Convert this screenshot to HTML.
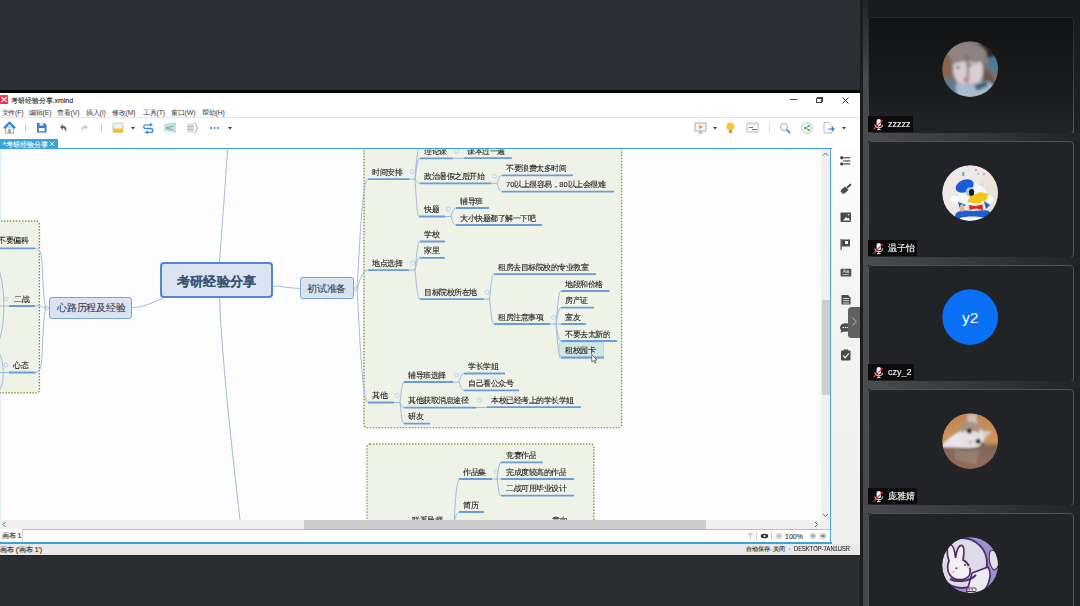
<!DOCTYPE html>
<html><head><meta charset="utf-8"><style>
html,body{margin:0;padding:0;width:1080px;height:606px;overflow:hidden;background:#2c2f33}
body{position:relative;font-family:'Liberation Sans',sans-serif;}
div{font-family:'Liberation Sans',sans-serif;}
</style></head><body>
<div style="position:absolute;left:0px;top:0px;width:862px;height:90px;background:#2c2f33"></div>
<div style="position:absolute;left:0px;top:90px;width:862px;height:3px;background:#050505"></div>
<div style="position:absolute;left:0px;top:555px;width:862px;height:51px;background:#2b2e31"></div>
<div style="position:absolute;left:0px;top:555px;width:862px;height:1px;background:#222427"></div>
<div style="position:absolute;left:0px;top:93px;width:860px;height:462px;background:#ffffff"></div>
<svg style="position:absolute;left:0;top:95px" width="9" height="10"><defs><linearGradient id="ti" x1="0" y1="1" x2="1" y2="0"><stop offset="0" stop-color="#e8235a"/><stop offset="1" stop-color="#f04a3a"/></linearGradient></defs><rect x="0" y="0" width="8.2" height="9" rx="1" fill="url(#ti)"/><path d="M1.2 2.3 C3 3.5 5 5.5 7 7 M1.2 7 C3 5.5 5 3.5 7 2.3" fill="none" stroke="#fff" stroke-width="1.1"/></svg>
<div style="position:absolute;left:10.5px;top:97.00px;font-size:7px;line-height:7px;color:#222;white-space:nowrap;letter-spacing:0px;-webkit-text-stroke:0.1px #222;">考研经验分享.xmind</div>
<div style="position:absolute;left:790px;top:99px;width:7px;height:1px;background:#444"></div>
<div style="position:absolute;left:816px;top:98px;width:6px;height:5px;border:1px solid #444;box-sizing:border-box"></div>
<div style="position:absolute;left:817px;top:97px;width:6px;height:1px;background:#444"></div>
<div style="position:absolute;left:822px;top:97px;width:1px;height:5px;background:#444"></div>
<svg style="position:absolute;left:841px;top:96px" width="9" height="9"><path d="M1.5 1.5 L7.5 7.5 M1.5 7.5 L7.5 1.5" stroke="#333" stroke-width="1"/></svg>
<div style="position:absolute;left:1.5px;top:108.50px;font-size:7px;line-height:7px;color:#3a3a3a;white-space:nowrap;letter-spacing:-0.2px;-webkit-text-stroke:0.1px #3a3a3a;-webkit-text-stroke:0">文件(F)</div>
<div style="position:absolute;left:29px;top:108.50px;font-size:7px;line-height:7px;color:#3a3a3a;white-space:nowrap;letter-spacing:-0.2px;-webkit-text-stroke:0.1px #3a3a3a;-webkit-text-stroke:0">编辑(E)</div>
<div style="position:absolute;left:57px;top:108.50px;font-size:7px;line-height:7px;color:#3a3a3a;white-space:nowrap;letter-spacing:-0.2px;-webkit-text-stroke:0.1px #3a3a3a;-webkit-text-stroke:0">查看(V)</div>
<div style="position:absolute;left:86px;top:108.50px;font-size:7px;line-height:7px;color:#3a3a3a;white-space:nowrap;letter-spacing:-0.2px;-webkit-text-stroke:0.1px #3a3a3a;-webkit-text-stroke:0">插入(I)</div>
<div style="position:absolute;left:112px;top:108.50px;font-size:7px;line-height:7px;color:#3a3a3a;white-space:nowrap;letter-spacing:-0.2px;-webkit-text-stroke:0.1px #3a3a3a;-webkit-text-stroke:0">修改(M)</div>
<div style="position:absolute;left:143px;top:108.50px;font-size:7px;line-height:7px;color:#3a3a3a;white-space:nowrap;letter-spacing:-0.2px;-webkit-text-stroke:0.1px #3a3a3a;-webkit-text-stroke:0">工具(T)</div>
<div style="position:absolute;left:171px;top:108.50px;font-size:7px;line-height:7px;color:#3a3a3a;white-space:nowrap;letter-spacing:-0.2px;-webkit-text-stroke:0.1px #3a3a3a;-webkit-text-stroke:0">窗口(W)</div>
<div style="position:absolute;left:202px;top:108.50px;font-size:7px;line-height:7px;color:#3a3a3a;white-space:nowrap;letter-spacing:-0.2px;-webkit-text-stroke:0.1px #3a3a3a;-webkit-text-stroke:0">帮助(H)</div>
<div style="position:absolute;left:0px;top:116.5px;width:860px;height:1.0px;background:#e6e6e6"></div>
<svg style="position:absolute;left:0;top:117px" width="240" height="21">
<rect x="5.5" y="10" width="8" height="6.3" fill="#eee" stroke="#aaa" stroke-width="0.9"/>
<rect x="8.3" y="12.2" width="2.4" height="4" fill="#999"/>
<path d="M4 11.3 L9.5 5.8 L15 11.3" fill="none" stroke="#2e7fd6" stroke-width="2.2"/>
<rect x="25" y="7" width="1" height="8" fill="#ccc"/>
<path d="M37 6 H44.5 L46.5 8 V15.5 H37 Z" fill="#2f7fd8"/>
<rect x="39.5" y="6.3" width="4" height="2.2" fill="#fff"/>
<rect x="38.8" y="11" width="5.8" height="3.2" fill="#fff"/>
<path d="M60 10 L63 7 L63 9 C66 9 67 11 66 15 C65 12 64 11 63 11 L63 13 Z" fill="#666"/>
<path d="M88 10 L85 7 L85 9 C82 9 81 11 82 15 C83 12 84 11 85 11 L85 13 Z" fill="#ccc"/>
<rect x="101" y="7" width="1" height="8" fill="#ccc"/>
<rect x="113" y="6" width="10" height="9.5" rx="1" fill="#f2f2f2" stroke="#bbb" stroke-width="0.8"/>
<rect x="113" y="11.5" width="10" height="4" fill="#f3c12b"/>
<path d="M131 10 L135 10 L133 12.5 Z" fill="#333"/>
<path d="M150.5 7.8 H145.6 A1.85 1.85 0 0 0 145.6 11.5 H151 A1.9 1.9 0 0 1 151 15.3 H147" fill="none" stroke="#3f8fe0" stroke-width="1.3"/><path d="M150 5.8 L153.2 7.8 L150 9.8Z M147.8 13.3 L144.5 15.3 L147.8 17.3Z" fill="#3f8fe0"/>
<path d="M164 7 L176 5 L176 16 L164 14 Z" fill="#bfe0f0"/>
<path d="M166 11 L173 9 M166 11 L173 13" stroke="#6cbf5a" stroke-width="1"/>
<rect x="187" y="6.5" width="7" height="9" fill="#dcdcdc"/>
<path d="M187 9.5 H194 M187 12.5 H194" stroke="#aaa" stroke-width="0.7"/>
<path d="M194.5 5.5 C196.5 5.5 196 10 197.5 11 C196 12 196.5 16.5 194.5 16.5" fill="none" stroke="#6cbf6c" stroke-width="0.9"/>
<circle cx="211" cy="11" r="1" fill="#2e7fd6"/><circle cx="214.5" cy="11" r="1" fill="#2e7fd6"/><circle cx="218" cy="11" r="1" fill="#2e7fd6"/>
<path d="M228 10 L232 10 L230 12.5 Z" fill="#333"/>
</svg>
<svg style="position:absolute;left:690px;top:117px" width="170" height="21">
<rect x="5" y="6" width="11" height="8" fill="#f4f4f4" stroke="#999" stroke-width="0.8"/>
<path d="M9 8 L13 10 L9 12 Z" fill="#f39a1e"/>
<path d="M10.5 14 V16 M8 16 H13" stroke="#999" stroke-width="0.8"/>
<path d="M23 10 L27 10 L25 12.5 Z" fill="#333"/>
<circle cx="40.5" cy="9.5" r="4" fill="#f7c630"/>
<rect x="39" y="13" width="3" height="3" fill="#c9a030"/>
<rect x="57" y="6" width="11" height="9" fill="#fff" stroke="#aaa" stroke-width="0.8"/>
<rect x="57" y="6" width="11" height="2" fill="#ddd"/>
<rect x="59" y="10" width="4" height="1" fill="#e05050"/>
<rect x="62" y="12" width="5" height="1" fill="#3a7fd8"/>
<rect x="79" y="6" width="1" height="9" fill="#ddd"/>
<circle cx="94" cy="10" r="3.5" fill="none" stroke="#aaa" stroke-width="1"/>
<path d="M96.5 12.5 L100 16" stroke="#2e7fd6" stroke-width="1.6"/>
<circle cx="117" cy="11" r="5.5" fill="#f6f6f6" stroke="#bbb" stroke-width="0.8"/>
<path d="M115 11 L119 9 M115 11 L119 13" stroke="#3db04a" stroke-width="1"/>
<circle cx="115" cy="11" r="1" fill="#3db04a"/><circle cx="119" cy="9" r="1" fill="#3db04a"/><circle cx="119" cy="13" r="1" fill="#3db04a"/>
<path d="M134 5.5 H139 L142 8.5 V16 H134 Z" fill="#fff" stroke="#aaa" stroke-width="0.8"/>
<path d="M138 12 H144 M142 10 L144 12 L142 14" fill="none" stroke="#2e7fd6" stroke-width="1.1"/>
<path d="M152 10 L156 10 L154 12.5 Z" fill="#333"/>
</svg>
<div style="position:absolute;left:0px;top:138.5px;width:57.5px;height:9.5px;background:#3aa3d8"></div>
<div style="position:absolute;left:3px;top:140.50px;font-size:7px;line-height:7px;color:#fff;white-space:nowrap;letter-spacing:0px;-webkit-text-stroke:0.1px #fff;">*考研经验分享</div>
<svg style="position:absolute;left:49px;top:141px" width="6" height="6"><path d="M0.8 0.8 L5 5 M0.8 5 L5 0.8" stroke="#fff" stroke-width="0.9"/></svg>
<div style="position:absolute;left:0px;top:147.8px;width:831.5px;height:1.5999999999999943px;background:#3aa3d8"></div>
<div style="position:absolute;left:0px;top:149.6px;width:830px;height:370.4px;background:#fdfdfd"></div>
<div style="position:absolute;left:830px;top:148px;width:1.3999999999999773px;height:395px;background:#44a8dc"></div>
<div style="position:absolute;left:831.4px;top:149.4px;width:28.600000000000023px;height:394.6px;background:linear-gradient(180deg,#fdfdfd 0%,#f3f3f3 40%,#efefef 100%)"></div>
<div style="position:absolute;left:821px;top:149.6px;width:9px;height:371.9px;background:#f0f0f0"></div>
<div style="position:absolute;left:821.5px;top:299.5px;width:8.0px;height:95.5px;background:#cdcdcd"></div>
<svg style="position:absolute;left:821px;top:150px" width="9" height="9"><path d="M2 5.5 L4.5 3 L7 5.5" fill="none" stroke="#555" stroke-width="0.9"/></svg>
<svg style="position:absolute;left:821px;top:511px" width="9" height="9"><path d="M2 3 L4.5 5.5 L7 3" fill="none" stroke="#555" stroke-width="0.9"/></svg>
<div style="position:absolute;left:0px;top:520px;width:830px;height:9px;background:#f0f0f0"></div>
<div style="position:absolute;left:0px;top:150px;width:1px;height:370px;background:#d8eef8"></div>
<div style="position:absolute;left:304px;top:520px;width:402px;height:9px;background:#cdcdcd"></div>
<svg style="position:absolute;left:0;top:520px" width="9" height="9"><path d="M5.5 2 L3 4.5 L5.5 7" fill="none" stroke="#555" stroke-width="0.9"/></svg>
<svg style="position:absolute;left:812px;top:520px" width="9" height="9"><path d="M3 2 L5.5 4.5 L3 7" fill="none" stroke="#555" stroke-width="0.9"/></svg>
<div style="position:absolute;left:0px;top:529px;width:830px;height:1px;background:#bdbdbd"></div>
<div style="position:absolute;left:0px;top:530px;width:830px;height:12px;background:#ffffff"></div>
<div style="position:absolute;left:22px;top:530px;width:1px;height:12px;background:#d0d0d0"></div>
<div style="position:absolute;left:0px;top:529px;width:22px;height:1px;background:#ffffff"></div>
<div style="position:absolute;left:1.5px;top:532.00px;font-size:7px;line-height:7px;color:#222;white-space:nowrap;letter-spacing:0px;-webkit-text-stroke:0.1px #222;">画布 1</div>
<svg style="position:absolute;left:745px;top:530px" width="85" height="12">
<path d="M2.5 3 H8.5 L6 6 V9 L5 9 V6 Z" fill="#ccc"/>
<rect x="11" y="1.5" width="0.8" height="9" fill="#ccc"/>
<ellipse cx="19.5" cy="6" rx="3.8" ry="2.3" fill="#333"/><circle cx="19.5" cy="6" r="1" fill="#fff"/>
<rect x="26" y="1.5" width="0.8" height="9" fill="#ccc"/>
<circle cx="34" cy="6" r="2.8" fill="#eee" stroke="#aaa" stroke-width="0.6"/><rect x="32.5" y="5.6" width="3" height="0.8" fill="#555"/>
<circle cx="68" cy="6" r="2.8" fill="#eee" stroke="#aaa" stroke-width="0.6"/><path d="M66.5 6 H69.5 M68 4.5 V7.5" stroke="#555" stroke-width="0.8"/>
<circle cx="78" cy="6" r="2.8" fill="#ddd" stroke="#aaa" stroke-width="0.6"/><rect x="76.5" y="5" width="3" height="2" fill="#777"/>
</svg>
<div style="position:absolute;left:785px;top:533.00px;font-size:7px;line-height:7px;color:#333;white-space:nowrap;letter-spacing:0px;-webkit-text-stroke:0.1px #333;">100%</div>
<div style="position:absolute;left:0px;top:542px;width:831.5px;height:1.5px;background:#3aa3d8"></div>
<div style="position:absolute;left:0px;top:543.5px;width:860px;height:11.5px;background:#e9e9e9"></div>
<div style="position:absolute;left:0px;top:546.00px;font-size:7px;line-height:7px;color:#222;white-space:nowrap;letter-spacing:-0.1px;-webkit-text-stroke:0.1px #222;">画布 ('画布 1')</div>
<div style="position:absolute;left:746px;top:546.30px;font-size:6px;line-height:6px;color:#222;white-space:nowrap;letter-spacing:-0.1px;-webkit-text-stroke:0.1px #222;">自动保存: 关闭</div>
<div style="position:absolute;left:788.5px;top:546.00px;font-size:6px;line-height:6px;color:#999;white-space:nowrap;letter-spacing:0px;-webkit-text-stroke:0.1px #999;">◦</div>
<div style="position:absolute;left:794.2px;top:545.2px;font-size:7.6px;line-height:7.6px;color:#222;white-space:nowrap;transform:scaleX(0.76);transform-origin:0 0;-webkit-text-stroke:0.1px #222">DESKTOP-7AN1USR</div>
<svg style="position:absolute;left:832px;top:150px" width="28" height="215">
<g fill="#4a4a4a">
<circle cx="9.8" cy="7.8" r="1.7"/><circle cx="9.8" cy="13.9" r="1.7"/><circle cx="11.6" cy="10.9" r="0.7"/>
<rect x="11.5" y="7.2" width="6.8" height="1.2"/><rect x="12.5" y="10.3" width="5.8" height="1.2"/><rect x="11.5" y="13.3" width="6.8" height="1.2"/>
<path d="M9 40 L13 36.5 L16.5 40 L12.5 43.5 Z"/><path d="M14.2 37.2 L18.3 33.6 L19.6 34.9 L15.6 38.6 Z"/><path d="M9 40 L12.5 43.5 L11 44 L8.5 41.5 Z"/>
<rect x="8.5" y="62.4" width="10.5" height="9.5" rx="0.8"/>
<rect x="8.5" y="89" width="1.2" height="11"/><path d="M9.5 89.5 H18 V96.5 H9.5Z"/>
<rect x="8.6" y="118.7" width="10.7" height="7.8" rx="1"/>
<path d="M9.5 145 H16 L18.5 147.5 V154.5 H9.5Z"/>
<ellipse cx="13.5" cy="177.5" rx="5.5" ry="4.3"/><path d="M9.5 180 L8.5 183 L12.5 181Z"/>
<rect x="9" y="200.5" width="9.5" height="10" rx="0.8"/><rect x="11.5" y="199.5" width="4.5" height="2" rx="0.5"/>
</g>
<g fill="#fcfcfc">
<path d="M11 70.5 L14 67 L15.5 68.5 L16.5 67.5 L18 70.5Z"/><circle cx="16.5" cy="64.8" r="0.8"/>
<rect x="13" y="91" width="3" height="3"/>
<text x="13.9" y="123" font-size="5" text-anchor="middle" font-family="Liberation Sans" fill="#fcfcfc">Aa</text>
<rect x="10.5" y="124.2" width="6.5" height="0.6"/>
<rect x="11" y="148" width="6" height="0.8"/><rect x="11" y="150.3" width="6" height="0.8"/><rect x="11" y="152.6" width="6" height="0.8"/>
<circle cx="11.3" cy="177.5" r="0.8"/><circle cx="13.6" cy="177.5" r="0.8"/><circle cx="15.9" cy="177.5" r="0.8"/></g>
<path d="M11 205.5 L13 207.8 L16.8 203.3" fill="none" stroke="#fcfcfc" stroke-width="1.1"/>
</svg>
<div style="position:absolute;left:847.5px;top:306.8px;width:12.5px;height:31px;background:#606060;border-radius:3.5px 0 0 3.5px"></div>
<svg style="position:absolute;left:847px;top:306px" width="13" height="32"><path d="M5.5 11.5 L9 15.5 L5.5 19.5" fill="none" stroke="#bbb" stroke-width="0.9"/></svg>
<div style="position:absolute;left:0;top:0;width:821px;height:520px;clip-path:inset(149.6px 0 0 0);overflow:hidden">
<svg style="position:absolute;left:-22px;top:219.2px" width="63.4" height="175.8"><rect x="2" y="2" width="59.4" height="171.8" rx="3" fill="#eff2e6" stroke="#7f9442" stroke-width="1.4" stroke-dasharray="1.4 1.6"/></svg>
<svg style="position:absolute;left:361.7px;top:118px" width="261.59999999999997" height="311.6"><rect x="2" y="2" width="257.59999999999997" height="307.6" rx="3" fill="#eff2e6" stroke="#7f9442" stroke-width="1.4" stroke-dasharray="1.4 1.6"/></svg>
<svg style="position:absolute;left:364.6px;top:441.8px" width="230.79999999999995" height="160.2"><rect x="2" y="2" width="226.79999999999995" height="156.2" rx="3" fill="#eff2e6" stroke="#7f9442" stroke-width="1.4" stroke-dasharray="1.4 1.6"/></svg>
<div style="position:absolute;left:160px;top:262px;width:113px;height:36px;box-sizing:border-box;background:#dbe4f0;border:2px solid #4f87d0;border-radius:4px"></div>
<div style="position:absolute;left:49px;top:297px;width:83px;height:21.5px;box-sizing:border-box;background:#dae4f1;border:1.4px solid #7aa3da;border-radius:2.5px"></div>
<div style="position:absolute;left:300px;top:277.4px;width:54px;height:22px;box-sizing:border-box;background:#dae4f1;border:1.4px solid #7aa3da;border-radius:2.5px"></div>
<div style="position:absolute;left:559px;top:342px;width:45px;height:16.5px;background:#d5e5e4;border:0.8px solid #c3d9e2;box-sizing:border-box;border-radius:1.5px"></div>
<svg style="position:absolute;left:0;top:0" width="821" height="520"><path d="M227.5,150 C225,190 221,240 219.5,262" fill="none" stroke="#9dbbe2" stroke-width="1"/><path d="M219.5,298 C222,360 232,450 240,520" fill="none" stroke="#9dbbe2" stroke-width="1"/><path d="M163,298 C152,303 142,307.5 132,307.8" fill="none" stroke="#9dbbe2" stroke-width="1"/><path d="M273,286 C282,286 288,288.3 300,288.3" fill="none" stroke="#9dbbe2" stroke-width="1"/><rect x="-5" y="247.4" width="40" height="1.8" fill="#6b9bd9" rx="0.5"/><rect x="9" y="305.1" width="26" height="1.8" fill="#6b9bd9" rx="0.5"/><rect x="9" y="371.6" width="26.5" height="1.8" fill="#6b9bd9" rx="0.5"/><circle cx="46.5" cy="308" r="2" fill="#eef2f6" stroke="#b3c8e8" stroke-width="0.8"/><circle cx="6" cy="299" r="2" fill="#eef2f6" stroke="#b3c8e8" stroke-width="0.8"/><circle cx="6" cy="365" r="2" fill="#eef2f6" stroke="#b3c8e8" stroke-width="0.8"/><path d="M46,308 C42.5,300 43,262 41,254 C40,250 38,248.3 35,248.3" fill="none" stroke="#9dbbe2" stroke-width="1"/><path d="M35,306 L40,306 C42,306 43,307.5 46,308" fill="none" stroke="#9dbbe2" stroke-width="1"/><path d="M46,308 C42.5,316 43,355 41,366 C40,370 38,372.5 35.5,372.5" fill="none" stroke="#9dbbe2" stroke-width="1"/><path d="M-1,270 C3,282 3.8,296 3.8,306 C3.8,316 3,330 -1,341" fill="none" stroke="#9dbbe2" stroke-width="1"/><path d="M9,306 L-1,306" fill="none" stroke="#9dbbe2" stroke-width="1"/><path d="M9,372.5 L-1,372.5" fill="none" stroke="#9dbbe2" stroke-width="1"/><path d="M-1,353 C2.5,359 3.2,366 3.2,372.5 C3.2,379 2.5,385 -1,391" fill="none" stroke="#9dbbe2" stroke-width="1"/><circle cx="356.5" cy="288.5" r="2" fill="#eef2f6" stroke="#b3c8e8" stroke-width="0.8"/><rect x="368" y="178.2" width="41.30000000000001" height="1.8" fill="#6b9bd9" rx="0.5"/><rect x="368" y="269.20000000000005" width="41" height="1.8" fill="#6b9bd9" rx="0.5"/><rect x="368" y="401.6" width="26" height="1.8" fill="#6b9bd9" rx="0.5"/><circle cx="412.2" cy="171.7" r="2" fill="#eef2f6" stroke="#b3c8e8" stroke-width="0.8"/><circle cx="412.5" cy="263" r="2" fill="#eef2f6" stroke="#b3c8e8" stroke-width="0.8"/><circle cx="397" cy="395.5" r="2" fill="#eef2f6" stroke="#b3c8e8" stroke-width="0.8"/><path d="M357,288.5 C360.3,233.8 362.5,179.1 368,179.1" fill="none" stroke="#9dbbe2" stroke-width="1"/><path d="M357,288.5 C360.3,279.3 362.5,270.1 368,270.1" fill="none" stroke="#9dbbe2" stroke-width="1"/><path d="M357,288.5 C360.3,345.5 362.5,402.5 368,402.5" fill="none" stroke="#9dbbe2" stroke-width="1"/><path d="M409,179.1 L415,179.1" fill="none" stroke="#9dbbe2" stroke-width="1"/><path d="M415,179.1 C415.5,168 417,158 418,148" fill="none" stroke="#9dbbe2" stroke-width="1"/><path d="M415,179.1 C416.5,168.7 417.5,158.3 420,158.3" fill="none" stroke="#9dbbe2" stroke-width="1"/><path d="M415,179.1 C416.5,181.2 417.5,183.4 420,183.4" fill="none" stroke="#9dbbe2" stroke-width="1"/><path d="M415,179.1 C416.2,197.8 417.0,216.5 419,216.5" fill="none" stroke="#9dbbe2" stroke-width="1"/><rect x="420" y="157.4" width="33" height="1.8" fill="#6b9bd9" rx="0.5"/><circle cx="456.5" cy="151.5" r="2" fill="#eef2f6" stroke="#b3c8e8" stroke-width="0.8"/><path d="M453,158.3 L464,158.3" fill="none" stroke="#9dbbe2" stroke-width="1"/><rect x="464" y="157.29999999999998" width="48" height="1.8" fill="#6b9bd9" rx="0.5"/><rect x="420" y="182.5" width="71" height="1.8" fill="#6b9bd9" rx="0.5"/><circle cx="494.5" cy="176.3" r="2" fill="#eef2f6" stroke="#b3c8e8" stroke-width="0.8"/><path d="M491,183.4 L497,183.4" fill="none" stroke="#9dbbe2" stroke-width="1"/><path d="M497,183.4 C498.5,179.4 499.5,175.3 502,175.3" fill="none" stroke="#9dbbe2" stroke-width="1"/><path d="M497,183.4 C498.5,187.5 499.5,191.6 502,191.6" fill="none" stroke="#9dbbe2" stroke-width="1"/><rect x="502" y="174.4" width="71" height="1.8" fill="#6b9bd9" rx="0.5"/><rect x="502" y="190.7" width="112" height="1.8" fill="#6b9bd9" rx="0.5"/><rect x="419" y="215.6" width="26" height="1.8" fill="#6b9bd9" rx="0.5"/><circle cx="448.5" cy="209" r="2" fill="#eef2f6" stroke="#b3c8e8" stroke-width="0.8"/><path d="M445,216.5 L451,216.5" fill="none" stroke="#9dbbe2" stroke-width="1"/><path d="M451,216.5 C452.5,212.2 453.5,208 456,208" fill="none" stroke="#9dbbe2" stroke-width="1"/><path d="M451,216.5 C452.5,220.8 453.5,225 456,225" fill="none" stroke="#9dbbe2" stroke-width="1"/><rect x="456" y="207.1" width="33" height="1.8" fill="#6b9bd9" rx="0.5"/><rect x="456" y="224.1" width="86" height="1.8" fill="#6b9bd9" rx="0.5"/><path d="M409,270.1 L415,270.1" fill="none" stroke="#9dbbe2" stroke-width="1"/><path d="M415,270.1 C416.5,255.8 417.5,241.5 420,241.5" fill="none" stroke="#9dbbe2" stroke-width="1"/><path d="M415,270.1 C416.5,264.0 417.5,257.8 420,257.8" fill="none" stroke="#9dbbe2" stroke-width="1"/><path d="M415,270.1 C416.5,284.6 417.5,299.2 420,299.2" fill="none" stroke="#9dbbe2" stroke-width="1"/><rect x="420" y="240.6" width="25" height="1.8" fill="#6b9bd9" rx="0.5"/><rect x="420" y="256.90000000000003" width="25" height="1.8" fill="#6b9bd9" rx="0.5"/><rect x="420" y="298.3" width="64" height="1.8" fill="#6b9bd9" rx="0.5"/><circle cx="487" cy="292.3" r="2" fill="#eef2f6" stroke="#b3c8e8" stroke-width="0.8"/><path d="M483,299.1 L489.5,299.1" fill="none" stroke="#9dbbe2" stroke-width="1"/><path d="M489.5,299.1 C490.9,286.6 491.8,274.1 494,274.1" fill="none" stroke="#9dbbe2" stroke-width="1"/><path d="M489.5,299.1 C490.9,311.6 491.8,324 494,324" fill="none" stroke="#9dbbe2" stroke-width="1"/><rect x="494" y="273.20000000000005" width="102" height="1.8" fill="#6b9bd9" rx="0.5"/><rect x="494" y="323.1" width="56" height="1.8" fill="#6b9bd9" rx="0.5"/><circle cx="553.6" cy="317.5" r="2" fill="#eef2f6" stroke="#b3c8e8" stroke-width="0.8"/><path d="M550,324 L556,324" fill="none" stroke="#9dbbe2" stroke-width="1"/><path d="M556,324 C557.5,307.5 558.5,291 561,291" fill="none" stroke="#9dbbe2" stroke-width="1"/><path d="M556,324 C557.5,315.9 558.5,307.7 561,307.7" fill="none" stroke="#9dbbe2" stroke-width="1"/><path d="M556,324 C557.5,324.0 558.5,324 561,324" fill="none" stroke="#9dbbe2" stroke-width="1"/><path d="M556,324 C557.5,332.5 558.5,341 561,341" fill="none" stroke="#9dbbe2" stroke-width="1"/><path d="M556,324 C557.5,340.8 558.5,357.5 561,357.5" fill="none" stroke="#9dbbe2" stroke-width="1"/><rect x="561" y="290.1" width="48.5" height="1.8" fill="#6b9bd9" rx="0.5"/><rect x="561" y="306.8" width="33" height="1.8" fill="#6b9bd9" rx="0.5"/><rect x="561" y="323.1" width="25" height="1.8" fill="#6b9bd9" rx="0.5"/><rect x="561" y="340.1" width="56" height="1.8" fill="#6b9bd9" rx="0.5"/><rect x="561" y="356.6" width="43" height="1.8" fill="#6b9bd9" rx="0.5"/><path d="M394,402.5 L400,402.5" fill="none" stroke="#9dbbe2" stroke-width="1"/><path d="M400,402.5 C401.2,392.2 402.0,382 404,382" fill="none" stroke="#9dbbe2" stroke-width="1"/><path d="M400,402.5 C401.2,405.1 402.0,407.6 404,407.6" fill="none" stroke="#9dbbe2" stroke-width="1"/><path d="M400,402.5 C401.2,413.1 402.0,423.7 404,423.7" fill="none" stroke="#9dbbe2" stroke-width="1"/><rect x="404" y="381.1" width="49" height="1.8" fill="#6b9bd9" rx="0.5"/><circle cx="456.5" cy="375" r="2" fill="#eef2f6" stroke="#b3c8e8" stroke-width="0.8"/><path d="M453,382 L459,382" fill="none" stroke="#9dbbe2" stroke-width="1"/><path d="M459,382 C460.5,377.8 461.5,373.5 464,373.5" fill="none" stroke="#9dbbe2" stroke-width="1"/><path d="M459,382 C460.5,386.2 461.5,390.4 464,390.4" fill="none" stroke="#9dbbe2" stroke-width="1"/><rect x="464" y="372.6" width="41" height="1.8" fill="#6b9bd9" rx="0.5"/><rect x="464" y="389.5" width="55" height="1.8" fill="#6b9bd9" rx="0.5"/><rect x="404" y="406.70000000000005" width="72" height="1.8" fill="#6b9bd9" rx="0.5"/><circle cx="479.5" cy="400" r="2" fill="#eef2f6" stroke="#b3c8e8" stroke-width="0.8"/><path d="M476,407.6 L487,407.4" fill="none" stroke="#9dbbe2" stroke-width="1"/><rect x="487" y="406.3" width="94" height="1.8" fill="#6b9bd9" rx="0.5"/><rect x="404" y="422.8" width="26" height="1.8" fill="#6b9bd9" rx="0.5"/><rect x="501" y="461.40000000000003" width="42" height="1.8" fill="#6b9bd9" rx="0.5"/><rect x="459" y="478.1" width="33" height="1.8" fill="#6b9bd9" rx="0.5"/><circle cx="496" cy="472" r="2" fill="#eef2f6" stroke="#b3c8e8" stroke-width="0.8"/><path d="M492,479 L497,479" fill="none" stroke="#9dbbe2" stroke-width="1"/><path d="M497,479 C498.2,470.6 499.0,462.3 501,462.3" fill="none" stroke="#9dbbe2" stroke-width="1"/><path d="M497,479 C498.2,479.0 499.0,479 501,479" fill="none" stroke="#9dbbe2" stroke-width="1"/><path d="M497,479 C498.2,487.3 499.0,495.6 501,495.6" fill="none" stroke="#9dbbe2" stroke-width="1"/><rect x="501" y="478.1" width="73" height="1.8" fill="#6b9bd9" rx="0.5"/><rect x="501" y="494.70000000000005" width="73" height="1.8" fill="#6b9bd9" rx="0.5"/><rect x="459" y="511.1" width="25" height="1.8" fill="#6b9bd9" rx="0.5"/><path d="M454,525 C455,505 456,485 459,479" fill="none" stroke="#9dbbe2" stroke-width="1"/><path d="M454,525 C455,518 456,513 459,512" fill="none" stroke="#9dbbe2" stroke-width="1"/></svg>
<div style="position:absolute;left:176.5px;top:275.00px;font-size:13px;line-height:13px;color:#3d5675;white-space:nowrap;letter-spacing:0.4px;-webkit-text-stroke:0.1px #3d5675;font-weight:bold">考研经验分享</div>
<div style="position:absolute;left:57px;top:303.20px;font-size:10px;line-height:10px;color:#34404f;white-space:nowrap;letter-spacing:-0.25px;-webkit-text-stroke:0.1px #34404f;">心路历程及经验</div>
<div style="position:absolute;left:307px;top:284.00px;font-size:10px;line-height:10px;color:#33404f;white-space:nowrap;letter-spacing:-0.25px;-webkit-text-stroke:0.1px #33404f;">初试准备</div>
<div style="position:absolute;left:-1.60px;top:236.20px;font-size:15.0px;line-height:15.0px;color:#1c1c1c;white-space:nowrap;transform:scale(0.5);transform-origin:0 0;-webkit-text-stroke:0.22px #1c1c1c">不要偏科</div>
<div style="position:absolute;left:13.90px;top:294.70px;font-size:15.0px;line-height:15.0px;color:#1c1c1c;white-space:nowrap;transform:scale(0.5);transform-origin:0 0;-webkit-text-stroke:0.22px #1c1c1c">二战</div>
<div style="position:absolute;left:13.40px;top:360.80px;font-size:15.0px;line-height:15.0px;color:#1c1c1c;white-space:nowrap;transform:scale(0.5);transform-origin:0 0;-webkit-text-stroke:0.22px #1c1c1c">心态</div>
<div style="position:absolute;left:372.40px;top:167.60px;font-size:15.0px;line-height:15.0px;color:#1c1c1c;white-space:nowrap;transform:scale(0.5);transform-origin:0 0;-webkit-text-stroke:0.22px #1c1c1c">时间安排</div>
<div style="position:absolute;left:372.40px;top:258.60px;font-size:15.0px;line-height:15.0px;color:#1c1c1c;white-space:nowrap;transform:scale(0.5);transform-origin:0 0;-webkit-text-stroke:0.22px #1c1c1c">地点选择</div>
<div style="position:absolute;left:372.40px;top:391.00px;font-size:15.0px;line-height:15.0px;color:#1c1c1c;white-space:nowrap;transform:scale(0.5);transform-origin:0 0;-webkit-text-stroke:0.22px #1c1c1c">其他</div>
<div style="position:absolute;left:424.40px;top:146.80px;font-size:15.0px;line-height:15.0px;color:#1c1c1c;white-space:nowrap;transform:scale(0.5);transform-origin:0 0;-webkit-text-stroke:0.22px #1c1c1c">理论课</div>
<div style="position:absolute;left:467.40px;top:146.70px;font-size:15.0px;line-height:15.0px;color:#1c1c1c;white-space:nowrap;transform:scale(0.5);transform-origin:0 0;-webkit-text-stroke:0.22px #1c1c1c">课本过一遍</div>
<div style="position:absolute;left:424.40px;top:171.90px;font-size:15.0px;line-height:15.0px;color:#1c1c1c;white-space:nowrap;transform:scale(0.5);transform-origin:0 0;-webkit-text-stroke:0.22px #1c1c1c">政治暑假之后开始</div>
<div style="position:absolute;left:505.90px;top:163.80px;font-size:15.0px;line-height:15.0px;color:#1c1c1c;white-space:nowrap;transform:scale(0.5);transform-origin:0 0;-webkit-text-stroke:0.22px #1c1c1c">不要浪费太多时间</div>
<div style="position:absolute;left:505.90px;top:180.10px;font-size:15.0px;line-height:15.0px;color:#1c1c1c;white-space:nowrap;transform:scale(0.5);transform-origin:0 0;-webkit-text-stroke:0.22px #1c1c1c">70以上很容易，80以上会很难</div>
<div style="position:absolute;left:424.40px;top:205.00px;font-size:15.0px;line-height:15.0px;color:#1c1c1c;white-space:nowrap;transform:scale(0.5);transform-origin:0 0;-webkit-text-stroke:0.22px #1c1c1c">快题</div>
<div style="position:absolute;left:460.40px;top:196.50px;font-size:15.0px;line-height:15.0px;color:#1c1c1c;white-space:nowrap;transform:scale(0.5);transform-origin:0 0;-webkit-text-stroke:0.22px #1c1c1c">辅导班</div>
<div style="position:absolute;left:460.40px;top:213.50px;font-size:15.0px;line-height:15.0px;color:#1c1c1c;white-space:nowrap;transform:scale(0.5);transform-origin:0 0;-webkit-text-stroke:0.22px #1c1c1c">大小快题都了解一下吧</div>
<div style="position:absolute;left:423.90px;top:230.00px;font-size:15.0px;line-height:15.0px;color:#1c1c1c;white-space:nowrap;transform:scale(0.5);transform-origin:0 0;-webkit-text-stroke:0.22px #1c1c1c">学校</div>
<div style="position:absolute;left:423.90px;top:246.30px;font-size:15.0px;line-height:15.0px;color:#1c1c1c;white-space:nowrap;transform:scale(0.5);transform-origin:0 0;-webkit-text-stroke:0.22px #1c1c1c">家里</div>
<div style="position:absolute;left:424.40px;top:287.70px;font-size:15.0px;line-height:15.0px;color:#1c1c1c;white-space:nowrap;transform:scale(0.5);transform-origin:0 0;-webkit-text-stroke:0.22px #1c1c1c">目标院校所在地</div>
<div style="position:absolute;left:498.40px;top:262.60px;font-size:15.0px;line-height:15.0px;color:#1c1c1c;white-space:nowrap;transform:scale(0.5);transform-origin:0 0;-webkit-text-stroke:0.22px #1c1c1c">租房去目标院校的专业教室</div>
<div style="position:absolute;left:498.40px;top:312.50px;font-size:15.0px;line-height:15.0px;color:#1c1c1c;white-space:nowrap;transform:scale(0.5);transform-origin:0 0;-webkit-text-stroke:0.22px #1c1c1c">租房注意事项</div>
<div style="position:absolute;left:565.40px;top:279.50px;font-size:15.0px;line-height:15.0px;color:#1c1c1c;white-space:nowrap;transform:scale(0.5);transform-origin:0 0;-webkit-text-stroke:0.22px #1c1c1c">地段和价格</div>
<div style="position:absolute;left:565.40px;top:296.20px;font-size:15.0px;line-height:15.0px;color:#1c1c1c;white-space:nowrap;transform:scale(0.5);transform-origin:0 0;-webkit-text-stroke:0.22px #1c1c1c">房产证</div>
<div style="position:absolute;left:565.40px;top:312.50px;font-size:15.0px;line-height:15.0px;color:#1c1c1c;white-space:nowrap;transform:scale(0.5);transform-origin:0 0;-webkit-text-stroke:0.22px #1c1c1c">室友</div>
<div style="position:absolute;left:565.40px;top:329.50px;font-size:15.0px;line-height:15.0px;color:#1c1c1c;white-space:nowrap;transform:scale(0.5);transform-origin:0 0;-webkit-text-stroke:0.22px #1c1c1c">不要去太新的</div>
<div style="position:absolute;left:565.40px;top:346.00px;font-size:15.0px;line-height:15.0px;color:#1c1c1c;white-space:nowrap;transform:scale(0.5);transform-origin:0 0;-webkit-text-stroke:0.22px #1c1c1c">租校园卡</div>
<div style="position:absolute;left:408.40px;top:370.50px;font-size:15.0px;line-height:15.0px;color:#1c1c1c;white-space:nowrap;transform:scale(0.5);transform-origin:0 0;-webkit-text-stroke:0.22px #1c1c1c">辅导班选择</div>
<div style="position:absolute;left:468.00px;top:362.00px;font-size:15.0px;line-height:15.0px;color:#1c1c1c;white-space:nowrap;transform:scale(0.5);transform-origin:0 0;-webkit-text-stroke:0.22px #1c1c1c">学长学姐</div>
<div style="position:absolute;left:468.00px;top:378.90px;font-size:15.0px;line-height:15.0px;color:#1c1c1c;white-space:nowrap;transform:scale(0.5);transform-origin:0 0;-webkit-text-stroke:0.22px #1c1c1c">自己看公众号</div>
<div style="position:absolute;left:408.40px;top:396.10px;font-size:15.0px;line-height:15.0px;color:#1c1c1c;white-space:nowrap;transform:scale(0.5);transform-origin:0 0;-webkit-text-stroke:0.22px #1c1c1c">其他获取消息途径</div>
<div style="position:absolute;left:491.40px;top:395.70px;font-size:15.0px;line-height:15.0px;color:#1c1c1c;white-space:nowrap;transform:scale(0.5);transform-origin:0 0;-webkit-text-stroke:0.22px #1c1c1c">本校已经考上的学长学姐</div>
<div style="position:absolute;left:408.40px;top:412.20px;font-size:15.0px;line-height:15.0px;color:#1c1c1c;white-space:nowrap;transform:scale(0.5);transform-origin:0 0;-webkit-text-stroke:0.22px #1c1c1c">研友</div>
<div style="position:absolute;left:506.40px;top:450.80px;font-size:15.0px;line-height:15.0px;color:#1c1c1c;white-space:nowrap;transform:scale(0.5);transform-origin:0 0;-webkit-text-stroke:0.22px #1c1c1c">竞赛作品</div>
<div style="position:absolute;left:462.90px;top:467.50px;font-size:15.0px;line-height:15.0px;color:#1c1c1c;white-space:nowrap;transform:scale(0.5);transform-origin:0 0;-webkit-text-stroke:0.22px #1c1c1c">作品集</div>
<div style="position:absolute;left:506.40px;top:467.50px;font-size:15.0px;line-height:15.0px;color:#1c1c1c;white-space:nowrap;transform:scale(0.5);transform-origin:0 0;-webkit-text-stroke:0.22px #1c1c1c">完成度较高的作品</div>
<div style="position:absolute;left:506.40px;top:484.10px;font-size:15.0px;line-height:15.0px;color:#1c1c1c;white-space:nowrap;transform:scale(0.5);transform-origin:0 0;-webkit-text-stroke:0.22px #1c1c1c">二战可用毕业设计</div>
<div style="position:absolute;left:462.90px;top:500.50px;font-size:15.0px;line-height:15.0px;color:#1c1c1c;white-space:nowrap;transform:scale(0.5);transform-origin:0 0;-webkit-text-stroke:0.22px #1c1c1c">简历</div>
<div style="position:absolute;left:412.40px;top:516.20px;font-size:15.0px;line-height:15.0px;color:#1c1c1c;white-space:nowrap;transform:scale(0.5);transform-origin:0 0;-webkit-text-stroke:0.22px #1c1c1c">联系导师</div>
<div style="position:absolute;left:552.40px;top:516.20px;font-size:15.0px;line-height:15.0px;color:#1c1c1c;white-space:nowrap;transform:scale(0.5);transform-origin:0 0;-webkit-text-stroke:0.22px #1c1c1c">意向</div>
<svg style="position:absolute;left:591px;top:353.5px" width="8" height="11"><path d="M0.8 0.8 L0.8 8 L2.6 6.4 L3.9 9.2 L5 8.7 L3.8 6 L6 5.9 Z" fill="#fff" stroke="#444" stroke-width="0.7"/></svg>
</div>
<div style="position:absolute;left:860px;top:0;width:220px;height:606px;background:linear-gradient(180deg,#1a1b1d 0%,#1f2023 20%,#202124 100%)"></div>
<div style="position:absolute;left:859.7px;top:0;width:3.3px;height:606px;background:#1c1d1f"></div>
<div style="position:absolute;left:863px;top:0;width:5px;height:606px;background:linear-gradient(180deg,#232427 0%,#46494d 13%,#4a4c50 60%,#44464a 100%)"></div>
<div style="position:absolute;left:868px;top:16.6px;width:205.5px;height:117px;border-radius:4px;background:linear-gradient(180deg,#28292c 0%,#3c3e42 50%,#56585c 100%)"></div>
<div style="position:absolute;left:869px;top:17.6px;width:203.5px;height:115px;border-radius:3px;background:linear-gradient(180deg,#121315 0%,#18191b 50%,#222326 100%)"></div>
<div style="position:absolute;left:941.7px;top:40.8px;width:56.6px;height:56.6px;border-radius:50%;overflow:hidden" ><svg width="57" height="57" viewBox="0 0 57 57">
<defs><clipPath id="c0"><circle cx="28.5" cy="28.5" r="28.3"/></clipPath>
<filter id="bl0" x="-20%" y="-20%" width="140%" height="140%"><feGaussianBlur stdDeviation="1.4"/></filter></defs>
<g clip-path="url(#c0)"><g filter="url(#bl0)">
<rect x="-5" y="-5" width="67" height="67" fill="#7a6e6c"/>
<path d="M36 -5 H62 V22 C55 16 46 18 40 14Z" fill="#25282e"/>
<path d="M-5 5 C4 8 10 18 11 30 C10 38 6 40 -5 40Z" fill="#86654e"/>
<path d="M4 10 C14 0 34 -2 44 10 L46 24 C40 18 26 14 10 20Z" fill="#8f8381"/>
<ellipse cx="52" cy="23" rx="6.5" ry="7.5" fill="#4f7a97"/>
<path d="M39 26 C46 28 52 34 54 45 L42 46Z" fill="#6b5751"/>
<path d="M11 22 C16 17 34 16 40 22 C42 30 41 38 36 43 C32 46 26 47 21 45 C15 42 11 36 11 28Z" fill="#d8cdd2"/>
<path d="M10 22 C18 18 28 18 36 21" fill="none" stroke="#8f8381" stroke-width="3.5"/>
<path d="M24.5 13 C26 22 26.5 32 25 42" fill="none" stroke="#6a5c5a" stroke-width="1.8"/>
<ellipse cx="16" cy="26.5" rx="2.2" ry="1.2" fill="#556275"/>
<ellipse cx="28" cy="24.3" rx="2.2" ry="1.2" fill="#556275"/>
<ellipse cx="24" cy="38.6" rx="3" ry="1.5" fill="#c6655c"/>
<path d="M-5 35 C5 36 13 40 17 46 L18 62 H-5Z" fill="#5f7a90"/>
<path d="M14 42 C22 44 32 42 40 40 C46 40 50 42 52 46 V62 H14Z" fill="#a8bccc"/>
<path d="M32 44 L44 40 L46 45 L35 50Z" fill="#40607c"/>
</g></g></svg></div>
<div style="position:absolute;left:868px;top:116.1px;width:45px;height:16px;background:#0c0c0d"></div>
<svg style="position:absolute;left:872px;top:117.6px" width="12" height="13"><path d="M4.6 3.2 a2.2 2.2 0 0 1 4.4 0 V6.3 a2.2 2.2 0 0 1 -4.4 0 Z" fill="#eee"/><path d="M2.8 6.5 a4 3.3 0 0 0 8 0 M6.8 9.8 V11.5 M5 11.6 H8.6" fill="none" stroke="#e6e6e6" stroke-width="1"/><path d="M1.5 11.5 L10.8 2.2" stroke="#d8403a" stroke-width="1.1"/></svg>
<div style="position:absolute;left:887.5px;top:120.1px;font-size:9px;line-height:9px;color:#f0f0f0;white-space:nowrap;-webkit-text-stroke:0.15px #f0f0f0;will-change:transform">zzzzz</div>
<div style="position:absolute;left:863px;top:132.5px;width:217px;height:8px;background:linear-gradient(90deg,#4a4c50 0%,#3a3c40 40%,#232427 100%)"></div>
<div style="position:absolute;left:868px;top:140.5px;width:205.5px;height:117px;box-sizing:border-box;border:1px solid #505256;border-radius:4px;background:#222326"></div>
<div style="position:absolute;left:941.7px;top:164.7px;width:56.6px;height:56.6px;border-radius:50%;overflow:hidden" ><svg width="57" height="57" viewBox="0 0 57 57">
<defs><clipPath id="c1"><circle cx="28.5" cy="28.5" r="28.3"/></clipPath>
<filter id="bl1" x="-20%" y="-20%" width="140%" height="140%"><feGaussianBlur stdDeviation="0.7"/></filter></defs>
<g clip-path="url(#c1)"><g filter="url(#bl1)">
<rect x="-5" y="-5" width="67" height="67" fill="#eee9e7"/>
<path d="M38 14 L60 4 V60 H42Z" fill="#ece2d8"/>
<circle cx="34" cy="5" r="1.2" fill="#d9a0a0"/><circle cx="36" cy="9" r="1" fill="#9ab8d8"/><circle cx="42" cy="9" r="1.5" fill="#e0b0b8"/>
<rect x="20" y="7" width="2.5" height="4" fill="#8fb0a8"/>
<ellipse cx="31" cy="30" rx="14" ry="11" fill="#f8f8fa"/>
<ellipse cx="13" cy="34.5" rx="4.5" ry="4" fill="#fbfbfb"/>
<ellipse cx="47" cy="34.5" rx="4.5" ry="4" fill="#fbfbfb"/>
<ellipse cx="22.7" cy="21" rx="9.5" ry="6.2" fill="#1a5bd6" transform="rotate(-22 22.7 21)"/>
<ellipse cx="28" cy="27" rx="4.2" ry="4.7" fill="#a8c6ea"/>
<ellipse cx="29.6" cy="27.5" rx="2.6" ry="3.6" fill="#121620"/>
<path d="M25.3 37 L28 31.5 L38.5 27 L46 29 L45 34.3 L36.4 38.8 Z" fill="#f5c518"/>
<path d="M16 37 L24 40 L18 44Z" fill="#1b5ed0"/>
<path d="M42 36 L48 40 L44 44Z" fill="#1b5ed0"/>
<path d="M27 40 L33 41 L40.5 39.5 L41 45 L34 43.5 L27.5 45Z" fill="#e1251f"/>
<path d="M14 48 C20 44 26 46 31 46 C38 46 44 44 48 47 L50 60 H10Z" fill="#1c5fd3"/>
<path d="M18 53 C24 51 36 51 44 53 V60 H18Z" fill="#f2f2f4"/>
<ellipse cx="20" cy="43" rx="2.3" ry="3.8" fill="#e2b495"/>
</g></g></svg></div>
<div style="position:absolute;left:868px;top:240.0px;width:49px;height:16px;background:#0c0c0d"></div>
<svg style="position:absolute;left:872px;top:241.5px" width="12" height="13"><path d="M4.6 3.2 a2.2 2.2 0 0 1 4.4 0 V6.3 a2.2 2.2 0 0 1 -4.4 0 Z" fill="#eee"/><path d="M2.8 6.5 a4 3.3 0 0 0 8 0 M6.8 9.8 V11.5 M5 11.6 H8.6" fill="none" stroke="#e6e6e6" stroke-width="1"/><path d="M1.5 11.5 L10.8 2.2" stroke="#d8403a" stroke-width="1.1"/></svg>
<div style="position:absolute;left:887.5px;top:244.0px;font-size:9px;line-height:9px;color:#f0f0f0;white-space:nowrap;-webkit-text-stroke:0.15px #f0f0f0;will-change:transform">温子怡</div>
<div style="position:absolute;left:863px;top:256.7px;width:217px;height:8px;background:linear-gradient(90deg,#4a4c50 0%,#3a3c40 40%,#232427 100%)"></div>
<div style="position:absolute;left:868px;top:264.7px;width:205.5px;height:117px;box-sizing:border-box;border:1px solid #505256;border-radius:4px;background:#222326"></div>
<div style="position:absolute;left:941.7px;top:288.9px;width:56.6px;height:56.6px;border-radius:50%;overflow:hidden" ><svg width="57" height="57" viewBox="0 0 57 57"><circle cx="28.5" cy="28.5" r="28.3" fill="#0a70f5"/>
<text x="28.3" y="33.8" text-anchor="middle" font-family="Liberation Sans, sans-serif" font-size="15.5" fill="#ffffff">y2</text></svg></div>
<div style="position:absolute;left:868px;top:364.2px;width:46px;height:16px;background:#0c0c0d"></div>
<svg style="position:absolute;left:872px;top:365.7px" width="12" height="13"><path d="M4.6 3.2 a2.2 2.2 0 0 1 4.4 0 V6.3 a2.2 2.2 0 0 1 -4.4 0 Z" fill="#eee"/><path d="M2.8 6.5 a4 3.3 0 0 0 8 0 M6.8 9.8 V11.5 M5 11.6 H8.6" fill="none" stroke="#e6e6e6" stroke-width="1"/><path d="M1.5 11.5 L10.8 2.2" stroke="#d8403a" stroke-width="1.1"/></svg>
<div style="position:absolute;left:887.5px;top:368.2px;font-size:9px;line-height:9px;color:#f0f0f0;white-space:nowrap;-webkit-text-stroke:0.15px #f0f0f0;will-change:transform">czy_2</div>
<div style="position:absolute;left:863px;top:380.5px;width:217px;height:8px;background:linear-gradient(90deg,#4a4c50 0%,#3a3c40 40%,#232427 100%)"></div>
<div style="position:absolute;left:868px;top:388.5px;width:205.5px;height:117px;box-sizing:border-box;border:1px solid #505256;border-radius:4px;background:#222326"></div>
<div style="position:absolute;left:941.7px;top:412.7px;width:56.6px;height:56.6px;border-radius:50%;overflow:hidden" ><svg width="57" height="57" viewBox="0 0 57 57">
<defs><clipPath id="c3"><circle cx="28.5" cy="28.5" r="28.3"/></clipPath>
<linearGradient id="g3" x1="0" y1="0" x2="0" y2="1"><stop offset="0" stop-color="#b98050"/><stop offset="0.5" stop-color="#cf985e"/><stop offset="0.58" stop-color="#80655a"/><stop offset="0.8" stop-color="#8e6c5c"/><stop offset="1" stop-color="#9c6a45"/></linearGradient>
<filter id="bl3" x="-20%" y="-20%" width="140%" height="140%"><feGaussianBlur stdDeviation="0.9"/></filter></defs>
<g clip-path="url(#c3)"><g filter="url(#bl3)">
<rect x="-5" y="-5" width="67" height="67" fill="url(#g3)"/>
<path d="M-2 34 C4 28 10 22 18 19 L30 28 L28 35 Z" fill="#e9e5ec"/>
<path d="M25 2 L34 1 L35 11 L26 11Z" fill="#d6bfbd"/>
<path d="M39 18 L50 18.5 L42 26Z" fill="#d8cbc3"/>
<ellipse cx="29.5" cy="23" rx="13" ry="11.5" fill="#e6e0e2" transform="rotate(25 29.5 23)"/>
<path d="M17 12 C24 7 34 8 39 14 L37 20 C31 17 24 17 19 20Z" fill="#a89282"/>
<circle cx="27.3" cy="17.9" r="2.5" fill="#161616"/>
<circle cx="36.2" cy="28.2" r="2.5" fill="#161616"/>
<circle cx="40.5" cy="31" r="1.6" fill="#5a4038"/>
<ellipse cx="27.8" cy="29.2" rx="1.8" ry="1.3" fill="#e09a9a"/>
<path d="M12 36 C18 38 28 39 38 37 L34 52 C28 50 20 48 14 46Z" fill="#a89088" opacity="0.5"/>
</g></g></svg></div>
<div style="position:absolute;left:868px;top:488.0px;width:49px;height:16px;background:#0c0c0d"></div>
<svg style="position:absolute;left:872px;top:489.5px" width="12" height="13"><path d="M4.6 3.2 a2.2 2.2 0 0 1 4.4 0 V6.3 a2.2 2.2 0 0 1 -4.4 0 Z" fill="#eee"/><path d="M2.8 6.5 a4 3.3 0 0 0 8 0 M6.8 9.8 V11.5 M5 11.6 H8.6" fill="none" stroke="#e6e6e6" stroke-width="1"/><path d="M1.5 11.5 L10.8 2.2" stroke="#d8403a" stroke-width="1.1"/></svg>
<div style="position:absolute;left:887.5px;top:492.0px;font-size:9px;line-height:9px;color:#f0f0f0;white-space:nowrap;-webkit-text-stroke:0.15px #f0f0f0;will-change:transform">庞雅婧</div>
<div style="position:absolute;left:863px;top:504.5px;width:217px;height:8px;background:linear-gradient(90deg,#4a4c50 0%,#3a3c40 40%,#232427 100%)"></div>
<div style="position:absolute;left:868px;top:512.5px;width:205.5px;height:117px;box-sizing:border-box;border:1px solid #505256;border-radius:4px;background:#222326"></div>
<div style="position:absolute;left:941.7px;top:536.7px;width:56.6px;height:56.6px;border-radius:50%;overflow:hidden" ><svg width="57" height="57" viewBox="0 0 57 57">
<defs><clipPath id="c4"><circle cx="28.5" cy="28.5" r="28.3"/></clipPath>
<filter id="bl4" x="-20%" y="-20%" width="140%" height="140%"><feGaussianBlur stdDeviation="0.45"/></filter></defs>
<g clip-path="url(#c4)"><g filter="url(#bl4)">
<rect x="-5" y="-5" width="67" height="67" fill="#9a92cc"/>
<circle cx="20" cy="26" r="25" fill="#dedaea" stroke="#4d2d66" stroke-width="1.8"/>
<path d="M48 14 C53 12 57 16 56 22 C58 26 56 32 52 33 C48 30 46 22 48 14Z" fill="#e2deec" stroke="#4d2d66" stroke-width="1.1"/>
<path d="M30 36 L46 30 C50 36 48 48 40 56 L24 58Z" fill="#ecebf2" stroke="#4d2d66" stroke-width="1.6"/>
<path d="M7 24 C4 15 5 8 8.5 8 C12 8 13 16 13.5 21 C14.5 13 17 7.5 20 8.5 C23 9.5 22 17 21 23 C27 26 30 33 27 39 C22 44 12 44 8 38 C5 34 5 28 7 24Z" fill="#f2f0f3" stroke="#4d2d66" stroke-width="1.7"/>
<circle cx="14.5" cy="31.2" r="1" fill="#4d2d66"/><circle cx="23" cy="28" r="1" fill="#4d2d66"/>
<ellipse cx="11" cy="35" rx="1.8" ry="1.2" fill="#f1b9cc"/><ellipse cx="26.5" cy="30" rx="1.8" ry="1.2" fill="#f1b9cc"/>
<path d="M8 42 C16 46 28 44 34 38" fill="none" stroke="#4d2d66" stroke-width="2"/>
<rect x="25" y="51" width="9" height="3.5" rx="1" fill="#f4f4f4" stroke="#4d2d66" stroke-width="1"/>
<rect x="26.5" y="52" width="1.6" height="1.6" fill="#e04a4a"/><rect x="29.5" y="52" width="1.6" height="1.6" fill="#7a70d0"/>
</g></g></svg></div>
</body></html>
